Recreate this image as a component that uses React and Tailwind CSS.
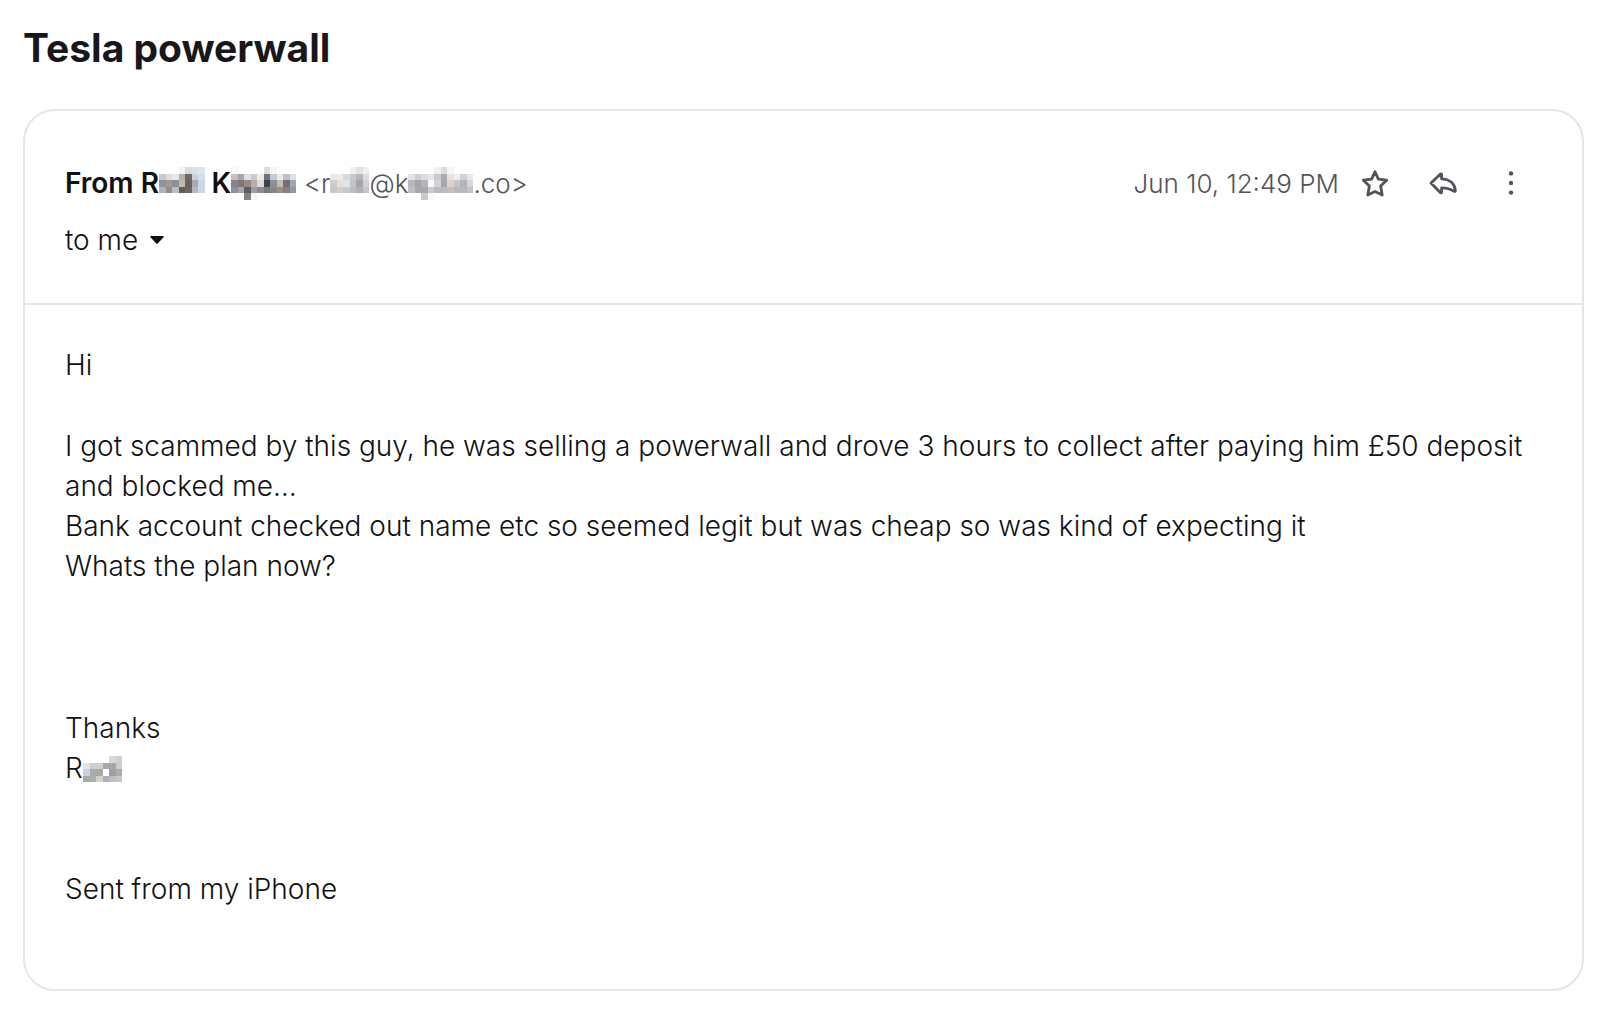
const CELL = 6.5;

// Rows of colours for each redacted bit of text, "" leaves the cell empty
const FIRST_NAME = [
  ["", "", "", "#f4f4f4", "#dcd9d8", "#dde1e6", "#dbe6ef"],
  ["#c3cad3", "#dddde0", "#e9e6e3", "#b4b3b4", "#706866", "#cdd0d5", "#d2e0ec"],
  ["#8f949c", "#a59689", "#8b9099", "#c4b8b0", "#6a625f", "#a9abb1", "#c9d7e3"],
  ["#aeb4bc", "#8f8d8e", "#b9bec4", "#625d5b", "#6d6866", "#b4bac0", "#cbd9e5"],
];

const LAST_NAME = [
  ["#f8f8f8", "", "", "", "", "#dadee4", "#f6f6f6", "", "", ""],
  ["#c0c2c6", "#a5a5a8", "#dfe2e4", "#d2cac4", "#eeeae5", "#6d7280", "#c6cad0", "#ecebea", "#c3c1c0", "#dbe1e6"],
  ["#85868b", "#7b7877", "#8f8b8a", "#b9aca2", "#d9dde1", "#3f3f47", "#8b919b", "#c2bcb6", "#76716f", "#a2a8b2"],
  ["#8d9098", "#a7a5a5", "#5f5b5a", "#9aa0a9", "#8c8c92", "#77767b", "#8b8785", "#9a9087", "#85817f", "#8f98a6"],
  ["", "", "#85817f", "#f4f4f4", "", "", "", "", "", ""],
];

const MAIL_USER = [
  ["", "", "", "#f0f0f0", "#e2e2e3", "#eeeeee"],
  ["#e9e9eb", "#efeae6", "#d9dadc", "#c8c9cc", "#b6b8bc", "#dcdcdd"],
  ["#cccdd0", "#eadfd6", "#dbe6f0", "#c3c3c5", "#a3a5aa", "#d2d2d4"],
  ["#c8c8ca", "#d0cfcf", "#c6c9ce", "#bcbcbe", "#b0b1b4", "#c6c4c4"],
];

const MAIL_DOMAIN = [
  ["", "", "", "", "#f2f0ef", "#dcdcdd", "#f6f6f6", "", "", ""],
  ["#e3e3e4", "#cfcfd1", "#dcdcdd", "#e6e6e6", "#cfc8c4", "#a8aab0", "#e3e3e4", "#eeeeee", "#d3d0ce", "#e8e8ea"],
  ["#b8b9bc", "#a5a5a8", "#b5b5b7", "#f6f9fb", "#cfd4da", "#a7a7ab", "#d9d3cf", "#c9c5c3", "#b3b5ba", "#d5d9de"],
  ["#c0c0c2", "#a8a8aa", "#a9aaae", "#c9cbcf", "#b9babd", "#bcbcbe", "#c8bfbb", "#b9b9bb", "#b7b9be", "#c4c4c6"],
  ["", "", "#cbcbcc", "#f8f8f8", "", "", "", "", "", ""],
];

const SIGNATURE = [
  ["", "", "", "", "#d8d9da", "#cfcfcf"],
  ["#dfe5ee", "#cfcfcf", "#d3cfca", "#a9a9a9", "#a5a7a8", "#cfcfcf"],
  ["#c6d2e2", "#ababab", "#a9a9a9", "#ffffff", "#9d9fa0", "#adadad"],
  ["#a9a9aa", "#adb0b3", "#d6cfca", "#b0b0b0", "#bcc0c2", "#c4c6c7"],
];

// ascent is the part above the baseline, the rest hangs below it
function Redacted({ rows, ascent = 26 }) {
  const width = rows[0].length * CELL;

  return (
    <svg
      width={width}
      height={ascent}
      viewBox={`0 0 ${width} ${ascent}`}
      className="inline-block overflow-visible align-baseline"
      shapeRendering="crispEdges"
      aria-hidden="true"
    >
      {rows.map((row, y) =>
        row.map(
          (fill, x) =>
            fill && (
              <rect
                key={`${x}-${y}`}
                x={x * CELL}
                y={y * CELL}
                width={CELL}
                height={CELL}
                fill={fill}
              />
            )
        )
      )}
    </svg>
  );
}

function StarIcon() {
  return (
    <svg width="28" height="28" viewBox="0 0 28 28" fill="none" stroke="currentColor" strokeWidth="2.8" strokeLinejoin="round" aria-hidden="true">
      <path d="M14 1.8 17.4 9.2 25.7 10.2 19.6 15.9 21.2 25 14 21.6 6.8 25 8.4 15.9 2.3 10.2 10.6 9.2Z" />
    </svg>
  );
}

function ReplyIcon() {
  return (
    <svg width="28" height="28" viewBox="0 0 28 28" fill="none" stroke="currentColor" strokeWidth="2.8" strokeLinejoin="round" aria-hidden="true">
      <path d="M2 13 11.2 4.2Q12.6 3.2 12.6 4.8V8.8C20.5 9.1 25.7 13.6 26.4 20.4Q26.4 22 24.7 21.2C21 18.6 17.5 17.7 12.6 17.8V22Q12.6 23.6 11.2 22.4Z" />
    </svg>
  );
}

function MoreIcon() {
  return (
    <svg width="28" height="28" viewBox="0 0 28 28" fill="currentColor" aria-hidden="true">
      <circle cx="14" cy="3.4" r="2.2" />
      <circle cx="14" cy="13" r="2.2" />
      <circle cx="14" cy="22.6" r="2.2" />
    </svg>
  );
}

const ACTIONS = [
  { label: "Star", Icon: StarIcon },
  { label: "Reply", Icon: ReplyIcon },
  { label: "More", Icon: MoreIcon },
];

function MessageHeader() {
  return (
    <header className="border-b-2 border-[#e6e6e7] pt-[52px] pr-[47px] pb-[43px] pl-10">
      <div className="flex items-center justify-between leading-10">
        <p className="whitespace-nowrap">
          <span className="font-semibold">
            From R<Redacted rows={FIRST_NAME} /> K<Redacted rows={LAST_NAME} />
          </span>{" "}
          <span className="text-[26px] text-[#545359]">
            &lt;r
            <Redacted rows={MAIL_USER} />
            @k
            <Redacted rows={MAIL_DOMAIN} />
            .co&gt;
          </span>
        </p>

        <div className="flex h-10 items-center text-[#545359]">
          <time className="mr-3 text-[26px] whitespace-nowrap">
            Jun 10, 12:49 PM
          </time>
          <div className="flex gap-5">
            {ACTIONS.map(({ label, Icon }) => (
              <button
                key={label}
                type="button"
                aria-label={label}
                className="flex size-12 items-center justify-center"
              >
                <Icon />
              </button>
            ))}
          </div>
        </div>
      </div>

      <button type="button" className="mt-4 flex items-center gap-3 leading-10">
        to me
        <svg width="14" height="8" viewBox="0 0 14 8" fill="currentColor" aria-hidden="true">
          <path d="M1 0H13Q14.2 .2 13.5 1.3L8 7.3Q7 8.3 6 7.3L.5 1.3Q-.2 .2 1 0Z" />
        </svg>
      </button>
    </header>
  );
}

export default function App() {
  return (
    <main className="pt-6 pr-4 pb-4 pl-[23px] font-['Inter','Open_Sans',sans-serif] text-[28px] font-light text-[#111113]">
      <h1 className="text-[39px] leading-[48px] font-bold text-[#18181b]">
        Tesla powerwall
      </h1>

      <article className="mt-[37px] rounded-4xl border-2 border-[#e6e6e7] bg-white">
        <MessageHeader />

        <div className="px-10 pt-10 pb-20 leading-10">
          <p>Hi</p>
          <p className="mt-[41px]">
            I got scammed by this guy, he was selling a powerwall and drove 3
            hours to collect after paying him £50 deposit and blocked me…
            <br />
            Bank account checked out name etc so seemed legit but was cheap so
            was kind of expecting it
            <br />
            Whats the plan now?
          </p>
          <p className="mt-[122px]">
            Thanks
            <br />
            R<Redacted rows={SIGNATURE} ascent={22} />
          </p>
          <p className="mt-[81px]">Sent from my iPhone</p>
        </div>
      </article>
    </main>
  );
}
